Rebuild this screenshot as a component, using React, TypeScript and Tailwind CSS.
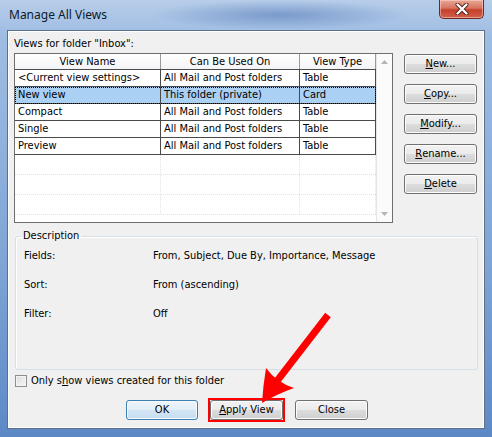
import React from "react";

type View = { name: string; usedOn: string; type: string; selected?: boolean };

const views: View[] = [
  { name: "<Current view settings>", usedOn: "All Mail and Post folders", type: "Table" },
  { name: "New view", usedOn: "This folder (private)", type: "Card", selected: true },
  { name: "Compact", usedOn: "All Mail and Post folders", type: "Table" },
  { name: "Single", usedOn: "All Mail and Post folders", type: "Table" },
  { name: "Preview", usedOn: "All Mail and Post folders", type: "Table" },
];

const btn =
  "flex h-[20px] w-[73px] items-center justify-center rounded-[3px] border border-[#707070] bg-[linear-gradient(to_bottom,#f2f2f2_0%,#ebebeb_50%,#dddddd_50%,#cfcfcf_100%)] shadow-[inset_0_0_0_1px_#fcfcfc] text-[11px] text-black";

function Btn({ pre, u, post }: { pre?: string; u: string; post?: string }) {
  return (
    <button className={btn}>
      {pre}
      <span className="underline underline-offset-1">{u}</span>
      {post}
    </button>
  );
}

export default function App() {
  return (
    <div className="relative h-[437px] w-[492px] overflow-hidden bg-[linear-gradient(to_bottom,#b7cde9_0%,#9fbde3_8%,#7fa5d6_60%,#5c89c6_100%)] font-['DejaVu_Sans_Condensed','Liberation_Sans',sans-serif] text-black">
      {/* blurred glass streaks */}
      <div className="pointer-events-none absolute left-[150px] top-0 h-[30px] w-[260px] bg-[radial-gradient(ellipse_at_center,rgba(60,100,170,0.45),transparent_70%)]" />

      {/* title bar */}
      <div className="relative flex h-[30px] items-start justify-between">
        <span className="pl-[9px] pt-[7px] text-[12px] leading-[16px] font-['Noto_Sans','Liberation_Sans',sans-serif] text-[#0c1a2c]">
          Manage All Views
        </span>
        <div className="mr-[8px] flex h-[19px] w-[45px] items-center justify-center rounded-b-[5px] border border-t-0 border-[#6b2a22] bg-[linear-gradient(to_bottom,#e9a796_0%,#d8735f_45%,#c5402b_55%,#d2604a_100%)] shadow-[inset_0_0_0_1px_rgba(255,220,210,0.5)]">
          <svg width="14" height="12" viewBox="0 0 14 12">
            <path
              d="M2.5 1.5 L11.5 10.5 M11.5 1.5 L2.5 10.5"
              stroke="#4a1c16"
              strokeWidth="4"
              fill="none"
              strokeLinecap="round"
            />
            <path
              d="M2.5 1.5 L11.5 10.5 M11.5 1.5 L2.5 10.5"
              stroke="#ffffff"
              strokeWidth="2.4"
              fill="none"
              strokeLinecap="round"
            />
          </svg>
        </div>
      </div>

      {/* client area */}
      <div className="mx-[7px] flex h-[399px] flex-col border border-[#5d7089] bg-[#f0f0f0] px-[6px] text-[11px] shadow-[inset_0_0_0_1px_#ffffff]">
        <div className="pt-[6px] leading-[14px]">Views for folder "Inbox":</div>

        <div className="mt-[2px] flex">
          {/* list */}
          <div className="flex h-[170px] w-[379px] border border-[#6e6e6e] bg-white">
            <div className="flex w-[361px] flex-col">
              <div className="flex h-[16px] border-b border-[#4a4a4a] bg-[linear-gradient(to_bottom,#ffffff,#f3f4f6)] leading-[15px]">
                <div className="w-[146px] border-r border-[#9a9a9a] text-center">View Name</div>
                <div className="w-[139px] border-r border-[#9a9a9a] text-center">Can Be Used On</div>
                <div className="w-[76px] border-r border-[#9a9a9a] text-center">View Type</div>
              </div>
              {views.map((v) => (
                <div
                  key={v.name}
                  className={
                    "flex h-[17px] border-b border-[#4a4a4a] leading-[16px] " +
                    (v.selected ? "bg-[#aad0f4] outline-1 outline-dotted outline-offset-[-1px] outline-black" : "")
                  }
                >
                  <div className="w-[146px] truncate border-r border-[#4a4a4a] pl-[3px]">{v.name}</div>
                  <div className="w-[139px] truncate border-r border-[#4a4a4a] pl-[3px]">{v.usedOn}</div>
                  <div className="w-[76px] truncate border-r border-[#4a4a4a] pl-[3px]">{v.type}</div>
                </div>
              ))}
              {[0, 1, 2].map((i) => (
                <div key={i} className="flex h-[20px] border-b border-dotted border-[#e2e2e2]">
                  <div className="w-[146px] border-r border-dotted border-[#e2e2e2]" />
                  <div className="w-[139px] border-r border-dotted border-[#e2e2e2]" />
                  <div className="w-[76px] border-r border-dotted border-[#e2e2e2]" />
                </div>
              ))}
            </div>
            {/* disabled scrollbar */}
            <div className="flex w-[16px] flex-col items-center justify-between border-l border-[#e6e6e6] bg-[#fbfbfb] py-[6px]">
              <svg width="7" height="4" viewBox="0 0 7 4">
                <path d="M0 4 L3.5 0 L7 4 Z" fill="#b4b4b4" />
              </svg>
              <svg width="7" height="4" viewBox="0 0 7 4">
                <path d="M0 0 L3.5 4 L7 0 Z" fill="#b4b4b4" />
              </svg>
            </div>
          </div>

          {/* side buttons */}
          <div className="ml-[11px] mt-[1px] flex flex-col gap-[10px]">
            <Btn u="N" post="ew..." />
            <Btn u="C" post="opy..." />
            <Btn u="M" post="odify..." />
            <Btn u="R" post="ename..." />
            <Btn u="D" post="elete" />
          </div>
        </div>

        {/* description group */}
        <fieldset className="ml-[1px] mt-[6px] h-[141px] w-[463px] rounded-[3px] border border-[#d5dfe5] shadow-[inset_1px_1px_0_#ffffff]">
          <legend className="ml-[5px] px-[2px] leading-[14px]">Description</legend>
          <div className="mt-[6px] grid grid-cols-[129px_1fr] gap-y-[15px] pl-[8px] leading-[14px]">
            <span>Fields:</span>
            <span>From, Subject, Due By, Importance, Message</span>
            <span>Sort:</span>
            <span>From (ascending)</span>
            <span>Filter:</span>
            <span>Off</span>
          </div>
        </fieldset>

        {/* checkbox */}
        <label className="mt-[4px] flex items-center gap-[4px] leading-[14px]">
          <span className="ml-[1px] h-[12px] w-[12px] border border-[#8e8f8f] bg-[linear-gradient(135deg,#dcdcdc,#f6f6f6)] shadow-[inset_0_0_0_1px_#f4f4f4]" />
          <span>
            Only s<span className="underline underline-offset-1">h</span>ow views created for this folder
          </span>
        </label>

        {/* bottom buttons */}
        <div className="mt-[12px] flex gap-[12px] pl-[112px]">
          <button className="flex h-[20px] w-[72px] items-center justify-center rounded-[3px] border border-[#3c7fb1] bg-[linear-gradient(to_bottom,#eef5fb_0%,#e2eef8_50%,#d3e5f3_50%,#c6ddf0_100%)] shadow-[inset_0_0_0_1px_#f5fbff] text-[11px]">
            OK
          </button>
          <div className="outline-2 outline-[#ff0000]">
            <Btn u="A" post="pply View" />
          </div>
          <button className={btn + " w-[72px]"}>Close</button>
        </div>
      </div>

      {/* red annotation arrow */}
      <svg className="pointer-events-none absolute left-0 top-0" width="492" height="437" viewBox="0 0 492 437">
        <line x1="328" y1="315" x2="277" y2="381" stroke="#ff0000" strokeWidth="7" />
        <path d="M262 403 Q263 386 266 368 Q276 382 294 388 Q277 394 262 403 Z" fill="#ff0000" />
      </svg>
    </div>
  );
}
